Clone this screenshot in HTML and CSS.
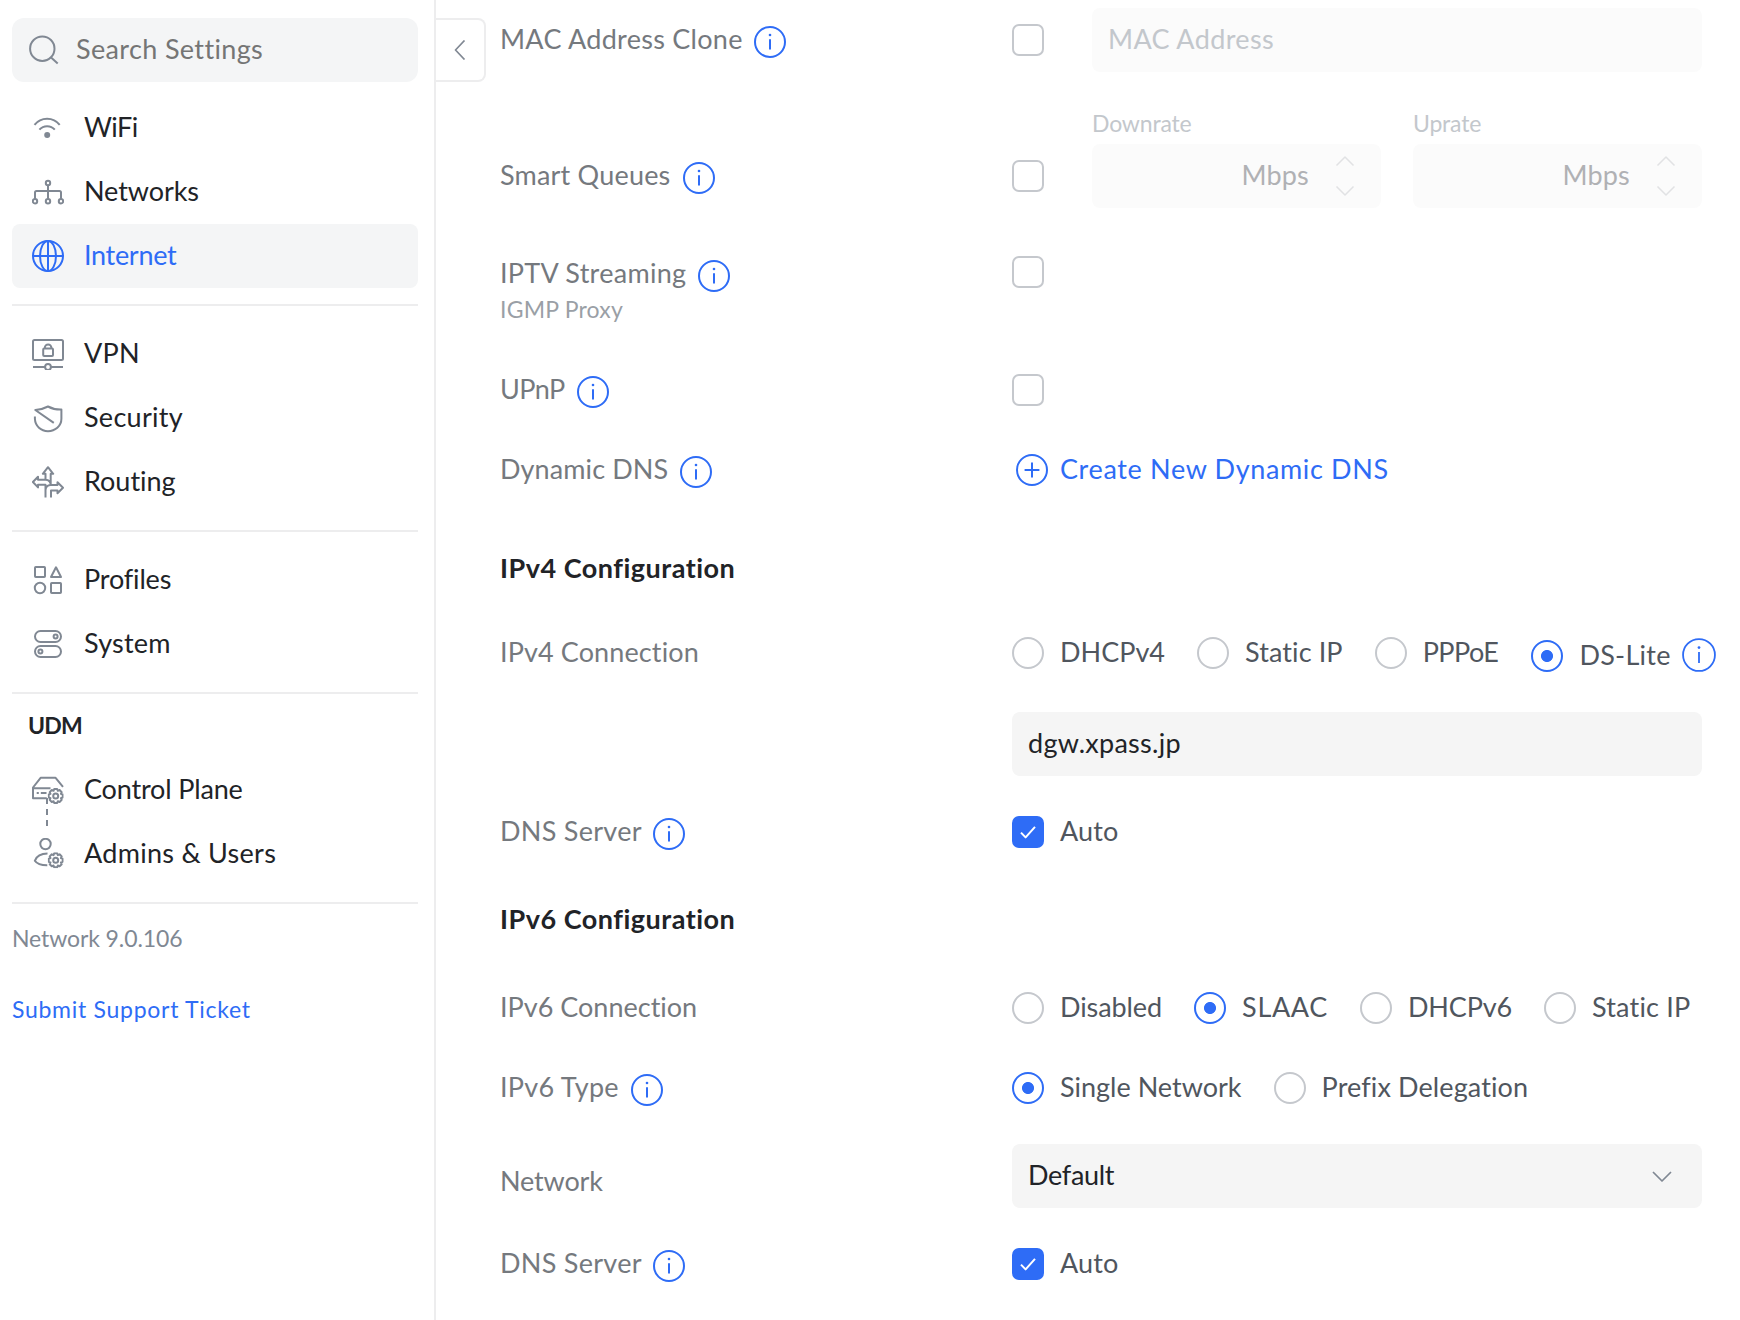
FILE: index.html
```html
<!DOCTYPE html>
<html lang="en">
<head>
<meta charset="utf-8">
<title>Internet Settings</title>
<link rel="stylesheet" href="styles.css">
</head>
<body>
<svg class="defs" width="0" height="0" aria-hidden="true">
  <symbol id="info" viewBox="0 0 32 32"><circle cx="16" cy="16" r="15"/><path d="M16 13.2V23.6"/><circle class="solid" cx="16" cy="9" r="1.3"/></symbol>
  <symbol id="plus" viewBox="0 0 32 32"><circle cx="16" cy="16" r="15"/><path d="M16 8.6V23.4M8.6 16H23.4"/></symbol>
  <symbol id="check" viewBox="0 0 32 32"><path d="M9 16.6L13.6 21.4L23 10.8"/></symbol>
  <symbol id="gear" viewBox="-8 -8 16 16"><path d="M7-1.5V1.5L5.2 2.15L6 3.9L3.9 6L2.15 5.2L1.5 7H-1.5L-2.15 5.2L-3.9 6L-6 3.9L-5.2 2.15L-7 1.5V-1.5L-5.2-2.15L-6-3.9L-3.9-6L-2.15-5.2L-1.5-7H1.5L2.15-5.2L3.9-6L6-3.9L5.2-2.15Z"/><circle r="2.5"/></symbol>
</svg>
<div class="app">
  <aside class="sidebar">
    <div class="search">
      <svg class="icon" viewBox="0 0 32 32"><circle cx="14.3" cy="14.7" r="12.2"/><path d="M22.8 23.2L29.7 29.4"/></svg>
      <span class="t4">Search Settings</span>
    </div>
    <nav class="group">
      <a class="item"><svg class="icon" viewBox="0 0 32 32"><path d="M2.5 12.8A16 16 0 0 1 27.7 12.8M7.4 17.7A10.2 10.2 0 0 1 22.8 17.7"/><circle class="solid" cx="15.2" cy="23" r="3"/></svg><span class="n5">WiFi</span></a>
      <a class="item"><svg class="icon" viewBox="0 0 32 32"><circle cx="16" cy="7" r="2.2"/><circle cx="3" cy="25.2" r="2.2"/><circle cx="16" cy="25.2" r="2.2"/><circle cx="29" cy="25.2" r="2.2"/><path d="M16 9.2V23M3 23V16.5Q3 15 4.5 15H27.5Q29 15 29 16.5V23"/></svg><span class="n1">Networks</span></a>
      <a class="item active"><svg class="icon" viewBox="0 0 32 32"><circle cx="16" cy="16" r="15"/><ellipse cx="16" cy="16" rx="8" ry="15"/><path d="M1 16H31M16 1V31"/></svg><span class="n3">Internet</span></a>
    </nav>
    <nav class="group">
      <a class="item"><svg class="icon" viewBox="0 0 32 32"><rect x="1" y="2" width="30" height="20" rx="1.5"/><rect x="11.2" y="10.5" width="9.8" height="7.6" rx="1"/><path d="M12.8 10.5V9.7A3.3 3.3 0 0 1 19.4 9.7V10.5M1 29H13M19 29H31"/><circle cx="16" cy="29" r="2.9"/></svg><span class="t3">VPN</span></a>
      <a class="item"><svg class="icon" viewBox="0 0 32 32"><path d="M2.9 14.5V16.8C3.2 24.3 9 29.2 16 29.2S29.4 24.3 29.4 16.8V7.6Q22 7.8 16 4.5Q10 7.7 3.3 8L21.8 20.9"/></svg><span class="t3">Security</span></a>
      <a class="item"><svg class="icon" viewBox="0 0 32 32"><path d="M13.5 13.7V7.8H10.8L16 1.2L21.2 7.8H18.7V19H25.5V16.3L31 21.8L25.5 27.2V24.5H19V31.5M13.5 31.5V18.7H6V21.4L.9 16L6 10.8V13.7H13.5Q18.7 14 18.7 19Q14 19.2 13.5 24"/></svg><span>Routing</span></a>
    </nav>
    <nav class="group">
      <a class="item"><svg class="icon" viewBox="0 0 32 32"><rect x="3" y="3" width="10" height="10" rx=".8"/><path d="M24 3.3L29 13H19Z"/><circle cx="8" cy="24" r="5.2"/><rect x="19" y="19" width="10" height="10" rx=".8"/></svg><span class="n2">Profiles</span></a>
      <a class="item"><svg class="icon" viewBox="0 0 32 32"><rect x="3" y="3" width="26" height="11" rx="5.5"/><circle cx="23.6" cy="8.5" r="2"/><rect x="3" y="18" width="26" height="11" rx="5.5"/><circle cx="8.4" cy="23.5" r="2"/></svg><span class="t2">System</span></a>
    </nav>
    <div class="group console">
      <h2 class="console-name n7">UDM</h2>
      <a class="item linked"><svg class="icon" viewBox="0 0 32 32"><path d="M31 12.8L23.6 3.8H8.6L1 13.5V24.3H14.8M1 14.2H18.5"/><path d="M4.7 19H6.8M8.8 19H14.5"/><use href="#gear" x="15.7" y="14" width="16" height="16"/></svg><span class="n2">Control Plane</span></a>
      <a class="item"><svg class="icon" viewBox="0 0 32 32"><circle cx="13.5" cy="6" r="5.2"/><path d="M15.5 15.6C9 15.6 4.5 18.5 2.8 22.8Q6 27.4 15.3 27.3"/><use href="#gear" x="15.7" y="14.3" width="16" height="16"/></svg><span class="t3">Admins &amp; Users</span></a>
    </div>
    <div class="footer">
      <span class="version">Network 9.0.106</span>
      <a class="support t7">Submit Support Ticket</a>
    </div>
  </aside>
  <button class="collapse" aria-label="Collapse"><svg viewBox="0 0 12 20"><path d="M10.5 .5L1.5 10L10.5 19.5"/></svg></button>
  <main class="settings">
    <section class="row mac">
      <div class="label"><span class="t3">MAC Address Clone</span><svg class="info near"><use href="#info"/></svg></div>
      <div class="control toggled"><i class="checkbox"></i><div class="input disabled"><span class="t4">MAC Address</span></div></div>
    </section>
    <section class="row queues">
      <div class="label"><span class="t2">Smart Queues</span><svg class="info"><use href="#info"/></svg></div>
      <div class="control toggled">
        <i class="checkbox"></i>
        <div class="field"><span class="caption">Downrate</span><div class="input number"><span class="t2">Mbps</span><svg class="stepper" viewBox="0 0 20 42"><path d="M1.5 10.5L10 2L18.5 10.5M1.5 31.5L10 40L18.5 31.5"/></svg></div></div>
        <div class="field"><span class="caption">Uprate</span><div class="input number"><span class="t2">Mbps</span><svg class="stepper" viewBox="0 0 20 42"><path d="M1.5 10.5L10 2L18.5 10.5M1.5 31.5L10 40L18.5 31.5"/></svg></div></div>
      </div>
    </section>
    <section class="row iptv">
      <div><div class="label"><span class="t3">IPTV Streaming</span><svg class="info"><use href="#info"/></svg></div><span class="hint t2">IGMP Proxy</span></div>
      <div class="control"><i class="checkbox"></i></div>
    </section>
    <section class="row upnp">
      <div class="label"><span class="n5">UPnP</span><svg class="info"><use href="#info"/></svg></div>
      <div class="control"><i class="checkbox"></i></div>
    </section>
    <section class="row ddns">
      <div class="label"><span class="t1">Dynamic DNS</span><svg class="info"><use href="#info"/></svg></div>
      <div class="control"><a class="create"><svg class="add"><use href="#plus"/></svg><span class="t6">Create New Dynamic DNS</span></a></div>
    </section>
    <h2 class="heading v4">IPv4 Configuration</h2>
    <section class="row conn4">
      <div class="label"><span class="t1">IPv4 Connection</span></div>
      <div class="control options">
        <label class="option"><i class="radio"></i><span>DHCPv4</span></label>
        <label class="option"><i class="radio"></i><span class="t1">Static IP</span></label>
        <label class="option"><i class="radio"></i><span class="n5">PPPoE</span></label>
        <label class="option lowered"><i class="radio on"></i><span class="t3">DS-Lite</span><svg class="info"><use href="#info"/></svg></label>
      </div>
    </section>
    <section class="row host">
      <div class="label"></div>
      <div class="control"><div class="input"><span class="t3">dgw.xpass.jp</span></div></div>
    </section>
    <section class="row dns">
      <div class="label"><span class="t3">DNS Server</span><svg class="info near"><use href="#info"/></svg></div>
      <div class="control"><label class="option"><i class="checkbox on"><svg><use href="#check"/></svg></i><span class="t1">Auto</span></label></div>
    </section>
    <h2 class="heading v6">IPv6 Configuration</h2>
    <section class="row conn6">
      <div class="label"><span>IPv6 Connection</span></div>
      <div class="control options">
        <label class="option"><i class="radio"></i><span class="n1">Disabled</span></label>
        <label class="option"><i class="radio on"></i><span class="t6">SLAAC</span></label>
        <label class="option"><i class="radio"></i><span class="n2">DHCPv6</span></label>
        <label class="option"><i class="radio"></i><span class="t2">Static IP</span></label>
      </div>
    </section>
    <section class="row type6">
      <div class="label"><span class="t3">IPv6 Type</span><svg class="info"><use href="#info"/></svg></div>
      <div class="control options">
        <label class="option"><i class="radio on"></i><span>Single Network</span></label>
        <label class="option"><i class="radio"></i><span class="t1">Prefix Delegation</span></label>
      </div>
    </section>
    <section class="row network">
      <div class="label"><span class="n2">Network</span></div>
      <div class="control"><div class="input select"><span class="n3">Default</span><svg class="chevron" viewBox="0 0 20 11"><path d="M1 1L10 10L19 1"/></svg></div></div>
    </section>
    <section class="row dns">
      <div class="label"><span class="t3">DNS Server</span><svg class="info near"><use href="#info"/></svg></div>
      <div class="control"><label class="option"><i class="checkbox on"><svg><use href="#check"/></svg></i><span class="t1">Auto</span></label></div>
    </section>
  </main>
</div>
</body>
</html>
```
FILE: styles.css
```css
:root {
  --text: #212327;
  --muted: #808893;
  --label: #75797e;
  --blue: #2e6cf6;
  --line: #ededee;
}

* { box-sizing: border-box; }

body {
  margin: 0;
  background: #fff;
  color: var(--text);
  font: 27px/32px Lato, "Open Sans", sans-serif;
  font-variant-ligatures: none;
  white-space: nowrap;
}

h2 { margin: 0; font-weight: 700; }

svg {
  display: block;
  flex: none;
  fill: none;
  stroke: currentColor;
  stroke-width: 2;
  stroke-linejoin: round;
}
.solid { fill: currentColor; stroke: none; }
.defs { position: absolute; }

/* tracking steps */
.n7 { letter-spacing: -.78px; }
.n5 { letter-spacing: -.55px; }
.n3 { letter-spacing: -.31px; }
.n2 { letter-spacing: -.16px; }
.n1 { letter-spacing: -.08px; }
.t1 { letter-spacing: .11px; }
.t2 { letter-spacing: .2px; }
.t3 { letter-spacing: .28px; }
.t4 { letter-spacing: .36px; }
.t6 { letter-spacing: .65px; }
.t7 { letter-spacing: .72px; }

.app { display: flex; align-items: flex-start; height: 1320px; overflow: hidden; }

/* sidebar */
.sidebar {
  flex: none;
  width: 436px;
  height: 1320px;
  padding: 18px 16px 0 12px;
  border-right: 2px solid var(--line);
}
.icon { width: 32px; height: 32px; color: var(--muted); }
.search {
  display: flex;
  align-items: center;
  gap: 16px;
  height: 64px;
  margin-bottom: 14px;
  padding-left: 16px;
  border-radius: 12px;
  background: #f4f5f6;
  color: #757575;
}
.group { padding-bottom: 16px; margin-bottom: 16px; border-bottom: 2px solid var(--line); }
.item {
  display: flex;
  align-items: center;
  gap: 20px;
  height: 64px;
  padding-left: 20px;
  border-radius: 8px;
}
.item span, .search span { padding-bottom: 2px; }
.item.active { background: #f4f5f6; color: var(--blue); }
.item.active .icon { color: var(--blue); }
.console { margin-top: -1px; }
.console-name { height: 32px; margin-bottom: 17px; padding-left: 16px; font-size: 23px; }
.linked { position: relative; }
.linked::after {
  content: "";
  position: absolute;
  left: 34px;
  top: 40px;
  width: 2px;
  height: 28px;
  background: repeating-linear-gradient(var(--muted) 0 6px, transparent 6px 11px);
}
.footer { display: flex; flex-direction: column; gap: 39px; padding-top: 2px; font-size: 23px; color: var(--muted); }
.version { letter-spacing: -.1px; }
.support { color: var(--blue); }

.collapse {
  display: flex;
  align-items: center;
  flex: none;
  width: 50px;
  height: 64px;
  margin-top: 18px;
  padding: 0 0 0 18px;
  border: 2px solid var(--line);
  border-left: 0;
  border-radius: 0 8px 8px 0;
  background: #fff;
  color: var(--muted);
}
.collapse svg { width: 12px; height: 20px; stroke-width: 1.7; }

/* settings form */
.settings { width: 1216px; padding-top: 8px; }
.row {
  display: grid;
  grid-template-columns: 498px 690px;
  column-gap: 14px;
  align-items: end;
  margin-left: 14px;
}
.label { display: flex; align-items: center; gap: 12px; height: 64px; color: var(--label); }
.label span { padding-bottom: 2px; }
.info { width: 32px; height: 32px; margin-top: 4px; color: var(--blue); }
.info.near { margin-left: -1px; }
.control { display: flex; align-items: center; min-height: 64px; }

.checkbox, .radio { flex: none; width: 32px; height: 32px; border: 2px solid #c5c8cd; }
.checkbox { border-radius: 7px; }
.radio { border-radius: 50%; }
.checkbox.on { border: 0; background: var(--blue); color: #fff; }
.checkbox svg { width: 32px; height: 32px; }
.radio.on {
  border-color: var(--blue);
  background: radial-gradient(circle, var(--blue) 5.6px, transparent 6.4px);
}

.input {
  display: flex;
  align-items: center;
  flex: 1;
  height: 64px;
  padding: 0 16px;
  border-radius: 8px;
  background: #f5f5f5;
}
.input span { padding-bottom: 2px; }
.toggled { align-items: flex-end; }
.toggled .checkbox { margin: 0 48px 16px 0; }
.disabled { background: #fbfbfb; color: #c3c7cc; }
.field { flex: none; width: 289px; }
.field + .field { margin-left: 32px; }
.caption { display: block; height: 32px; margin-bottom: 5px; font-size: 23px; letter-spacing: -.18px; color: #c3c7cc; }
.number { justify-content: flex-end; gap: 26px; padding-right: 26px; background: #fbfbfb; color: #b0b1b4; }
.stepper { width: 20px; height: 42px; color: #e1e2e4; stroke-width: 1.5; }
.chevron { width: 20px; height: 11px; margin-left: auto; margin-right: 14px; color: var(--muted); stroke-width: 1.7; }

.hint { display: block; margin-top: -11px; font-size: 23px; color: #9a9fa6; }
.create { display: flex; align-items: center; gap: 12px; margin-left: 4px; color: var(--blue); }
.create span, .option span { padding-bottom: 2px; }
.add { width: 32px; height: 32px; }

.options { gap: 32px; }
.option { display: flex; align-items: center; gap: 16px; flex: none; color: #50565e; }
.lowered { margin: 6px 0 0 1px; }
.lowered .info { width: 34px; height: 34px; margin: -2px 0 0 -5px; stroke-width: 1.7; }

.heading { height: 32px; margin-left: 14px; font-size: 27px; letter-spacing: .5px; }

/* vertical rhythm */
.queues { margin-top: 35px; }
.iptv { margin-top: 32px; align-items: start; height: 84px; }
.iptv .label { padding-top: 3px; }
.upnp { margin-top: 34px; }
.ddns { margin-top: 16px; }
.v4 { margin-top: 50px; }
.conn4 { margin-top: 37px; }
.host { margin-top: 27px; }
.dns { margin-top: 24px; }
.v6 { margin-top: 39px; }
.conn6 { margin-top: 41px; }
.type6 { margin-top: 16px; }
.network { margin-top: 24px; }
.network .label { height: 53px; }
```
